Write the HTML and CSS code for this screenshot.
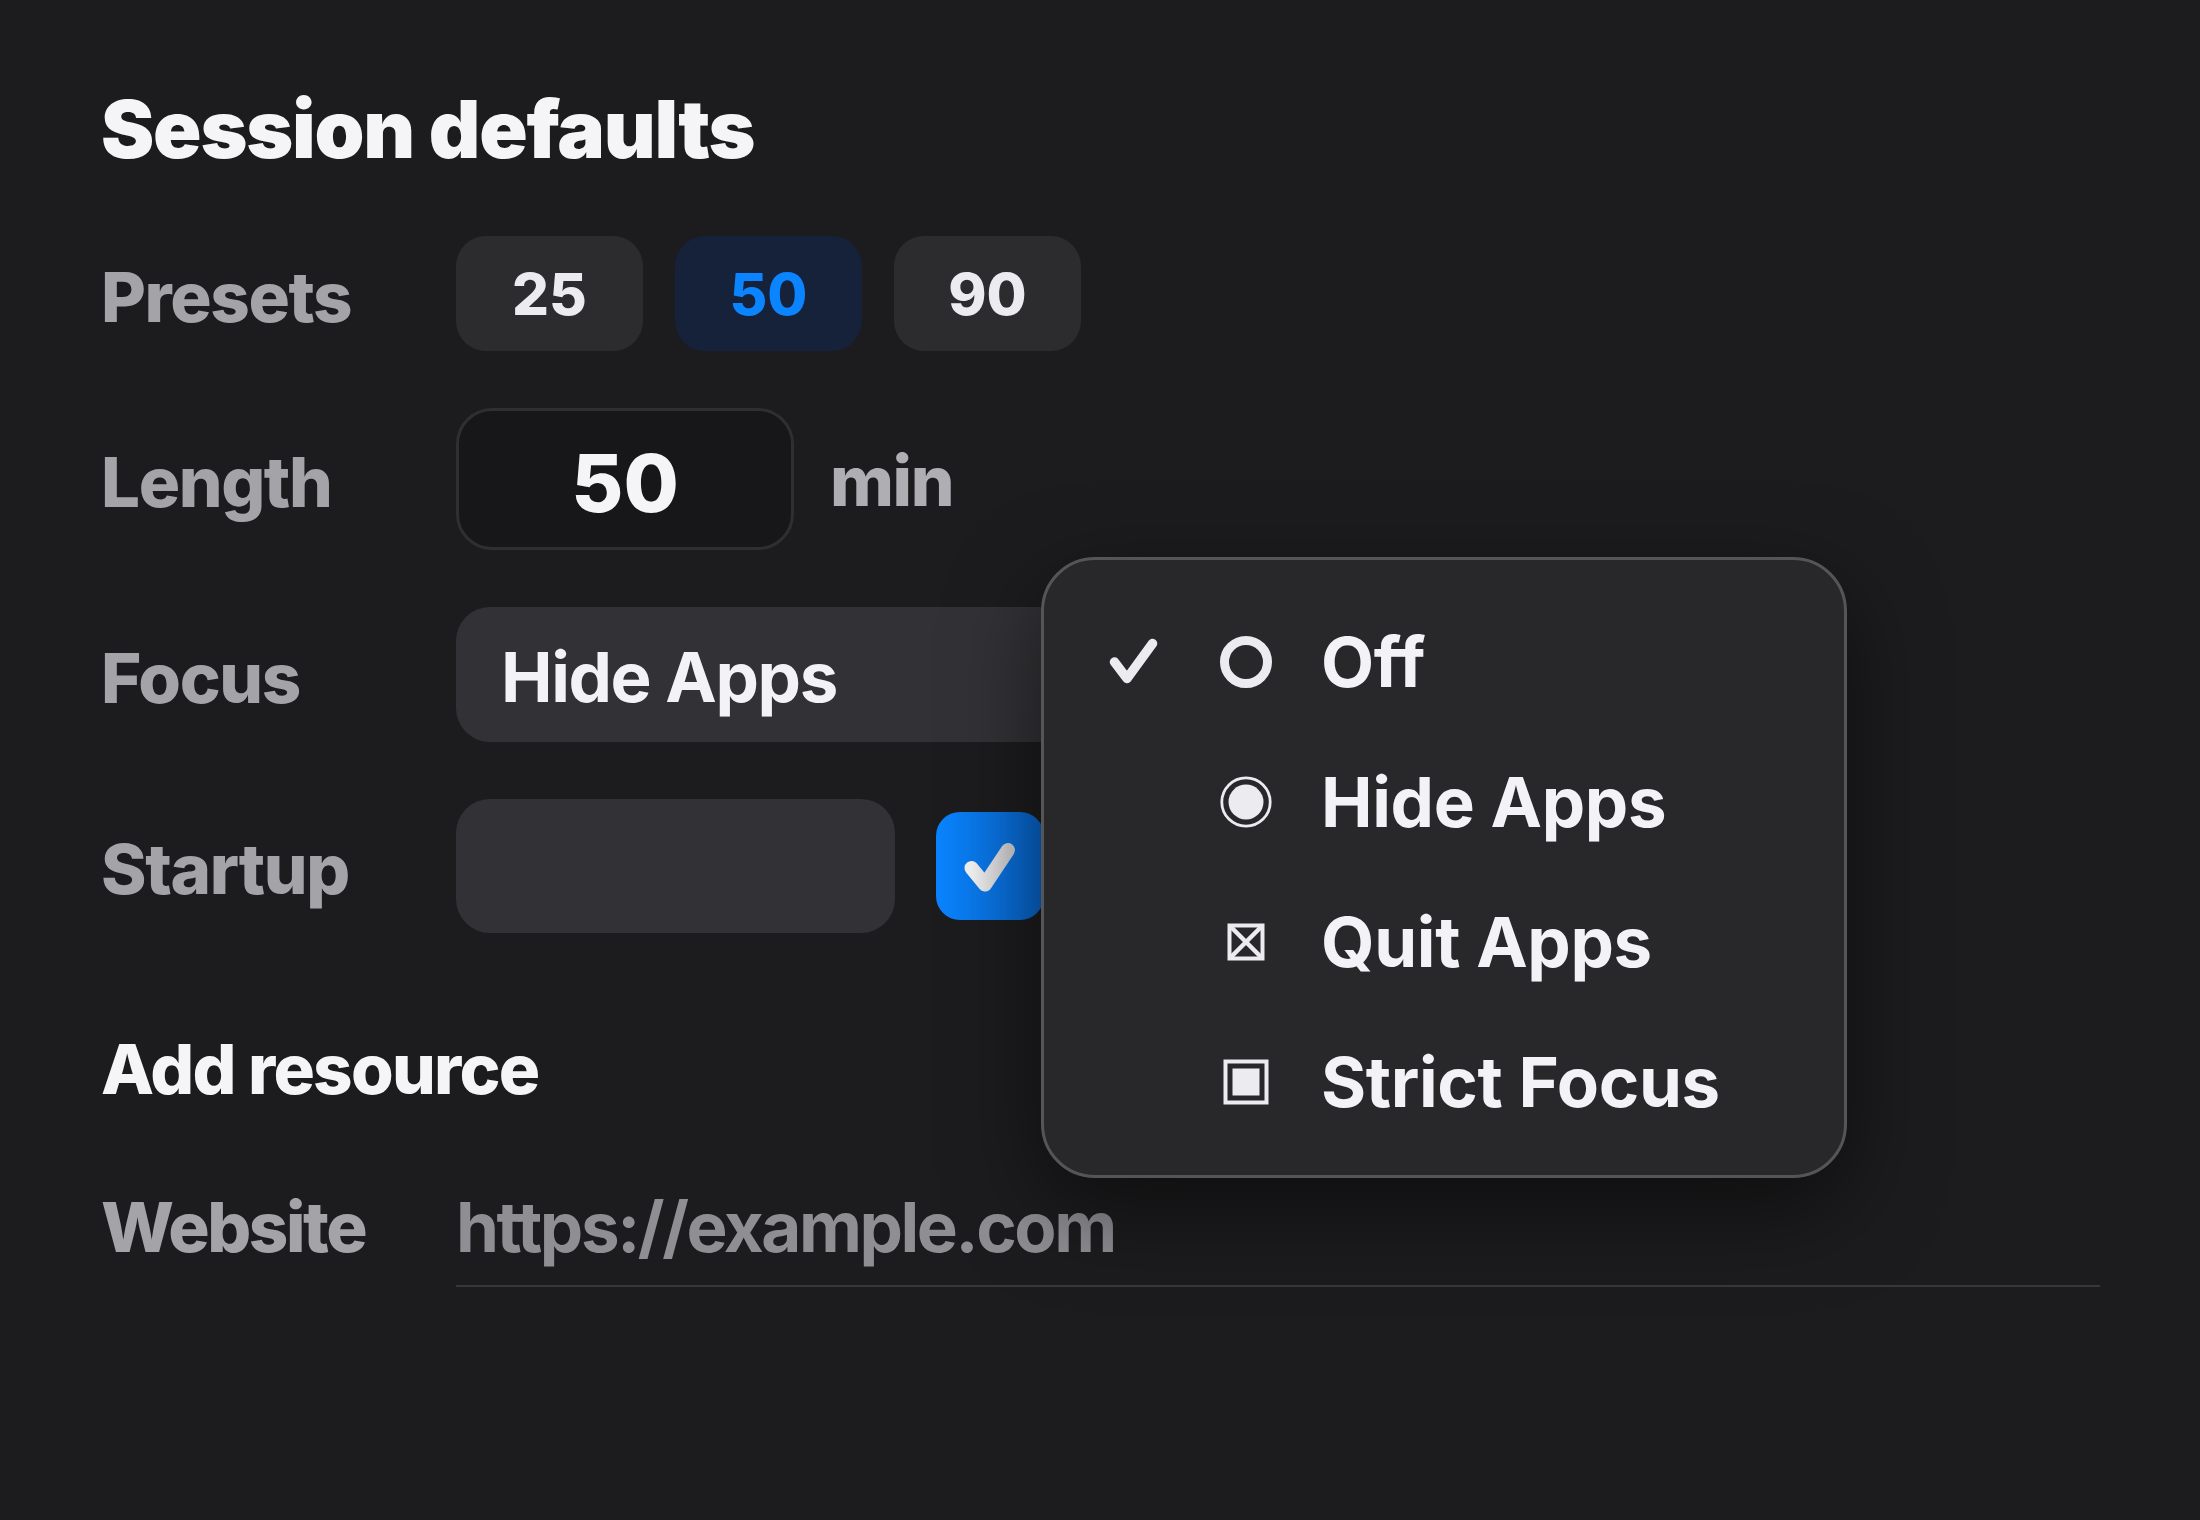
FILE: index.html
```html
<!DOCTYPE html>
<html lang="en">
<head>
  <meta charset="UTF-8">
  <title>Session defaults</title>
  <link rel="stylesheet" href="styles.css">
</head>
<body>
  <div class="settings">
    <h1 class="title">Session defaults</h1>

    <div class="row">
      <span class="label">Presets</span>
      <div class="presets">
        <button class="preset">25</button>
        <button class="preset active">50</button>
        <button class="preset">90</button>
      </div>
    </div>

    <div class="row">
      <span class="label">Length</span>
      <div class="length-box">50</div>
      <span class="unit">min</span>
    </div>

    <div class="row">
      <span class="label">Focus</span>
      <div class="select">Hide Apps</div>
    </div>

    <div class="row">
      <span class="label">Startup</span>
      <div class="startup-field"></div>
      <span class="checkbox">
        <svg width="108" height="108" viewBox="0 0 108 108">
          <defs>
            <linearGradient id="tick" x1="0" y1="0" x2="1" y2="0">
              <stop offset="0" stop-color="#f2f2f2"/>
              <stop offset="1" stop-color="#cdcdd0"/>
            </linearGradient>
          </defs>
          <path d="M35.5 56 L49 72.5 L72 38" fill="none" stroke="url(#tick)" stroke-width="14" stroke-linecap="round" stroke-linejoin="round"/>
        </svg>
      </span>
    </div>

    <h2 class="section">Add resource</h2>

    <div class="row url-row">
      <span class="label">Website</span>
      <div class="url-input">https://example.com</div>
    </div>
  </div>

  <!-- focus mode dropdown -->
  <div class="menu">
    <div class="menu-item">
      <svg class="mark" width="50" height="50" viewBox="0 0 50 50">
        <path d="M6.5 25 L19 41.5 L44.5 6.5" fill="none" stroke="#ebebf0" stroke-width="9.5" stroke-linecap="round" stroke-linejoin="round"/>
      </svg>
      <svg class="icon" width="56" height="56" viewBox="0 0 56 56">
        <circle cx="28" cy="28" r="21.5" fill="none" stroke="#ebebf0" stroke-width="9"/>
      </svg>
      <span class="item-text">Off</span>
    </div>
    <div class="menu-item">
      <span class="mark"></span>
      <svg class="icon" width="56" height="56" viewBox="0 0 56 56">
        <circle cx="28" cy="28" r="24.2" fill="none" stroke="#ebebf0" stroke-width="2.8"/>
        <circle cx="28" cy="28" r="17.5" fill="#ebebf0"/>
      </svg>
      <span class="item-text">Hide Apps</span>
    </div>
    <div class="menu-item">
      <span class="mark"></span>
      <svg class="icon" width="56" height="56" viewBox="0 0 56 56">
        <rect x="11.5" y="11.5" width="33" height="33" fill="none" stroke="#ebebf0" stroke-width="4"/>
        <path d="M13 13 L43 43 M43 13 L13 43" stroke="#ebebf0" stroke-width="4.5"/>
      </svg>
      <span class="item-text">Quit Apps</span>
    </div>
    <div class="menu-item">
      <span class="mark"></span>
      <svg class="icon" width="56" height="56" viewBox="0 0 56 56">
        <rect x="7.5" y="7.5" width="41" height="41" fill="none" stroke="#ebebf0" stroke-width="4"/>
        <rect x="14.5" y="14.5" width="27" height="27" fill="#ebebf0"/>
      </svg>
      <span class="item-text">Strict Focus</span>
    </div>
  </div>
</body>
</html>
```

FILE: styles.css
```css
body {
  margin: 0;
  width: 2200px;
  height: 1520px;
  overflow: hidden;
  position: relative;
  background: #1c1c1e;
  font-family: Inter, "Noto Sans", sans-serif;
  color: #f2f2f7;
}

.settings {
  padding: 81px 100px 0 101px;
}

.title {
  margin: 0 0 59px;
  font-size: 80px;
  line-height: 96px;
  font-weight: 900;
  letter-spacing: -0.015em;
  color: #f5f5f7;
}

.row {
  display: flex;
  align-items: center;
}

.row + .row {
  margin-top: 57px;
}

.label {
  flex: 0 0 355px;
  padding-top: 6px;
  font-size: 69px;
  font-weight: 800;
  letter-spacing: -0.02em;
  color: #a3a3a8;
}

/* Presets */
.presets {
  display: flex;
  gap: 32px;
}

.preset {
  width: 187px;
  height: 115px;
  border: none;
  border-radius: 30px;
  background: #2c2c2f;
  color: #ebebf0;
  font-family: inherit;
  font-size: 58px;
  font-weight: 800;
  padding: 0;
}

.preset.active {
  background: #16213a;
  color: #0a84ff;
}

/* Length */
.length-box {
  box-sizing: border-box;
  width: 338px;
  height: 142px;
  border: 3px solid #2f2f32;
  border-radius: 36px;
  background: #17171a;
  display: flex;
  align-items: center;
  justify-content: center;
  padding-top: 6px;
  font-size: 80px;
  font-weight: 800;
  color: #f5f5f7;
}

.unit {
  margin-left: 36px;
  padding-top: 4px;
  font-size: 69px;
  font-weight: 800;
  letter-spacing: -0.02em;
  color: #aeaeb3;
}

/* Focus select */
.select {
  box-sizing: border-box;
  width: 700px;
  height: 135px;
  padding: 4px 0 0 45px;
  border-radius: 34px;
  background: #323236;
  display: flex;
  align-items: center;
  font-size: 69px;
  font-weight: 700;
  letter-spacing: -0.02em;
  color: #f2f2f7;
}

/* Startup */
.startup-field {
  width: 439px;
  height: 134px;
  border-radius: 34px;
  background: #323236;
}

.checkbox {
  margin-left: 41px;
  width: 108px;
  height: 108px;
  border-radius: 24px;
  background: linear-gradient(to right, #0a84ff, #0862c4);
  display: block;
}

.checkbox svg {
  display: block;
}

/* Add resource */
.section {
  margin: 95px 0 0;
  font-size: 69px;
  line-height: 83px;
  font-weight: 800;
  letter-spacing: -0.025em;
  color: #f5f5f7;
}

.url-row {
  margin-top: 75px;
  align-items: flex-start;
}

.url-row .label {
  padding-top: 0;
  line-height: 83px;
  letter-spacing: -0.035em;
}

.url-input {
  flex: 1;
  padding-bottom: 16px;
  border-bottom: 2px solid #38383a;
  font-size: 69px;
  line-height: 83px;
  font-weight: 700;
  letter-spacing: -0.035em;
  color: #8e8e93;
}

/* Dropdown menu */
.menu {
  position: absolute;
  left: 1041px;
  top: 557px;
  box-sizing: border-box;
  width: 806px;
  height: 621px;
  padding: 32px 0 0 64px;
  border: 3px solid #555558;
  border-radius: 54px;
  background: #28282b;
  box-shadow: 0 30px 90px rgba(0, 0, 0, 0.5);
}

.menu-item {
  display: flex;
  align-items: center;
  height: 140px;
  font-size: 69px;
  line-height: 140px;
  font-weight: 700;
  letter-spacing: -0.005em;
  color: #f2f2f7;
}

.mark {
  flex: 0 0 50px;
  height: 50px;
  display: block;
}

.icon {
  margin-left: 60px;
  flex: 0 0 56px;
  display: block;
}

.item-text {
  margin-left: 47px;
}
```
